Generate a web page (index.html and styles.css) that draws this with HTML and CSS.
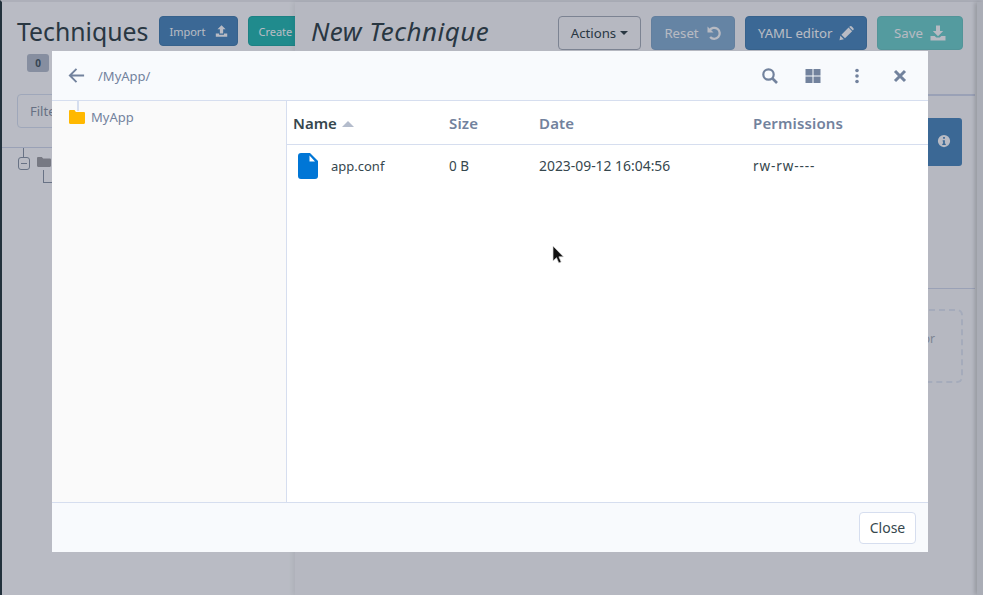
FILE: index.html
```html
<!DOCTYPE html>
<html>
  <head>
    <meta charset="UTF-8" />
    <meta name="viewport" content="width=device-width, initial-scale=1.0" />
    <title>Techniques</title>
    <link rel="stylesheet" href="styles.css">
  </head>
  <body>
    <div class="page">
      <aside class="sidebar">
        <div class="sidebar-head">
          <div class="title-row">
            <h1>Techniques</h1>
            <button class="btn btn-blue btn-small btn-import">Import
              <svg class="icon" viewBox="0 0 16 16"><path d="M8 1l5 5h-3v5H6V6H3zM1 11h4v1.500h6V11h4v4H1z"/></svg>
            </button>
            <button class="btn btn-teal btn-small">Create</button>
          </div>
          <span class="badge">0</span>
          <div class="filter">Filter</div>
        </div>
        <div class="tree">
          <span class="tree-toggle"></span>
          <svg class="tree-folder" viewBox="0 0 14 10"><path d="M0 1.200C0 .500.500 0 1.200 0h3.600l1.400 1.400h6.600c.7 0 1.200.5 1.200 1.200v6.200c0 .7-.5 1.200-1.200 1.200H1.200C.5 10 0 9.500 0 8.800z"/></svg>
          <span class="tree-branch"></span>
        </div>
      </aside>

      <main class="editor">
        <div class="editor-head">
          <h2>New Technique</h2>
          <div class="editor-actions">
            <button class="btn btn-outline btn-actions">Actions <span class="caret"></span></button>
            <button class="btn btn-blue btn-faded btn-reset">Reset
              <svg class="icon icon-large" viewBox="0 0 16 16"><path d="M1.500 1.500v6h6z" fill="currentColor"/><path d="M3.500 5.500a5.500 5.500 0 1 1 .6 6.500" fill="none" stroke="currentColor" stroke-width="2.300"/></svg>
            </button>
            <button class="btn btn-blue btn-yaml">YAML editor
              <svg class="icon icon-large" viewBox="0 0 16 16"><path d="M.5 15.500l.9-4.600 3.700 3.700zM2.500 9.800l7.400-7.400 3.700 3.700-7.400 7.400zM11 1.300c.7-.7 1.600-.7 2.300 0l1.400 1.400c.7.700.7 1.600 0 2.300l-.4.400-3.700-3.700z"/></svg>
            </button>
            <button class="btn btn-teal btn-faded btn-save">Save
              <svg class="icon icon-large" viewBox="0 0 16 16"><path d="M6 .5h4v5.500h3.200L8 11.200 2.800 6H6zM.5 11h4.200L6.200 12.500h3.600L11.300 11h4.200v4.500H.5z"/></svg>
            </button>
          </div>
        </div>
        <div class="editor-info">
          <div class="info-box">
            <svg class="icon" viewBox="0 0 16 16"><path fill-rule="evenodd" d="M8 1a7 7 0 1 0 0 14A7 7 0 0 0 8 1zM7 3.500h2v2H7zM6.500 7h2.500v4h1v1.500H6V11h1V8.500h-.5z"/></svg>
          </div>
        </div>
        <div class="editor-drop">
          <div class="drop-box">Drag and drop a method or</div>
        </div>
      </main>
      <div class="page-edge"></div>
    </div>

    <div class="backdrop"></div>

    <section class="modal">
      <header class="modal-head">
        <svg class="tool back" viewBox="0 0 20 20"><path d="M18 10H3M10 3l-7 7 7 7" fill="none" stroke="currentColor" stroke-width="2"/></svg>
        <span class="path">/MyApp/</span>
        <div class="tools">
          <svg class="tool" viewBox="0 0 16 16"><circle cx="6.500" cy="6.500" r="5.200" fill="none" stroke="currentColor" stroke-width="2.200"/><path d="M10.500 10.500l4.500 4.500" stroke="currentColor" stroke-width="2.600"/></svg>
          <svg class="tool" viewBox="0 0 16 16"><path d="M.5 1h7v6.500h-7zM8.500 1h7v6.500h-7zM.5 8.500h7V15h-7zM8.500 8.500h7V15h-7z"/></svg>
          <svg class="tool" viewBox="0 0 16 16"><circle cx="8" cy="2.500" r="1.800"/><circle cx="8" cy="8" r="1.800"/><circle cx="8" cy="13.500" r="1.800"/></svg>
          <svg class="tool" viewBox="0 0 16 16"><path d="M3 3l10 10M13 3L3 13" stroke="currentColor" stroke-width="3"/></svg>
        </div>
      </header>

      <div class="modal-body">
        <nav class="folders">
          <div class="folder">
            <svg class="folder-icon" viewBox="0 0 16 14"><path d="M0 1.200C0 .500.500 0 1.200 0h4.300l1.400 2h7.900c.7 0 1.200.5 1.200 1.200v9.600c0 .7-.5 1.200-1.200 1.200H1.200C.5 14 0 13.500 0 12.800z"/></svg>
            <span>MyApp</span>
          </div>
        </nav>
        <div class="files">
          <table>
            <thead>
              <tr>
                <th class="col-name sorted">Name <span class="sort-arrow"></span></th>
                <th class="col-size">Size</th>
                <th class="col-date">Date</th>
                <th>Permissions</th>
              </tr>
            </thead>
            <tbody>
              <tr>
                <td>
                  <div class="file-name">
                    <svg class="file-icon" viewBox="0 0 20 26"><path fill-rule="evenodd" d="M3 0h9l8 8v15a3 3 0 0 1-3 3H3a3 3 0 0 1-3-3V3a3 3 0 0 1 3-3zM11.500 2.500v6H17z"/></svg>
                    app.conf
                  </div>
                </td>
                <td>0 B</td>
                <td class="cell-date">2023-09-12 16:04:56</td>
                <td class="cell-perms">rw-rw----</td>
              </tr>
            </tbody>
          </table>
        </div>
      </div>

      <footer class="modal-foot">
        <button class="btn-close">Close</button>
      </footer>
    </section>

    <svg class="cursor" viewBox="0 0 13 20"><path d="M1 1v15l3.500-3.300 2.300 5.300 2.400-1-2.300-5.200H11.500z" fill="#111" stroke="#ddd" stroke-width=".7"/></svg>
  </body>
</html>
```

FILE: styles.css
```css
* {
  box-sizing: border-box;
  margin: 0;
  padding: 0;
}

html,
body {
  height: 100%;
  overflow: hidden;
}

body {
  background-color: #f8f9fc;
  font-family: "Noto Sans", sans-serif;
  font-size: 14px;
  color: #36474e;
}

.page {
  display: flex;
  height: 595px;
  border-left: 2px solid #2d3e45;
  border-top: 2px solid #e8e9ee;
}

/* left column */
.sidebar {
  width: 293px;
  flex-shrink: 0;
  overflow: hidden;
}

.sidebar-head {
  height: 146px;
  padding: 14px 0 0 15px;
  border-bottom: 1px solid #cfd6ea;
}

.title-row {
  display: flex;
  align-items: center;
  gap: 10px;
  width: 320px;
}

h1 {
  font-size: 24.800px;
  font-weight: 400;
  line-height: 30px;
  margin-right: 1px;
}

.badge {
  display: block;
  width: 22px;
  height: 18px;
  margin: 8px 0 0 10px;
  border-radius: 3px;
  background-color: #b4bccc;
  color: #4a5a66;
  font-size: 10px;
  font-weight: 700;
  line-height: 18px;
  text-align: center;
}

.filter {
  width: 260px;
  height: 34px;
  margin-top: 22px;
  padding-left: 12px;
  border: 1px solid #d6deef;
  border-radius: 4px;
  color: #8a94a6;
  font-size: 13px;
  line-height: 32px;
}

.tree {
  position: relative;
  height: 60px;
}

.tree-toggle {
  position: absolute;
  left: 16px;
  top: 9px;
  width: 12px;
  height: 13px;
  border: 1px solid #8b96a8;
  border-radius: 3px;
}

.tree-toggle::before {
  content: "";
  position: absolute;
  left: 4px;
  top: -10px;
  width: 1px;
  height: 9px;
  background-color: #8b96a8;
}

.tree-toggle::after {
  content: "";
  position: absolute;
  left: 2px;
  right: 2px;
  top: 5px;
  height: 1px;
  background-color: #8b96a8;
}

.tree-folder {
  position: absolute;
  left: 35px;
  top: 9px;
  width: 14px;
  height: 10px;
  fill: #a0a0a5;
}

.tree-branch {
  position: absolute;
  left: 41px;
  top: 22px;
  width: 10px;
  height: 13px;
  border-left: 1px solid #8b96a8;
  border-bottom: 1px solid #8b96a8;
}

/* right column */
.editor {
  flex: 1;
  min-width: 0;
  background-color: #f4f5f9;
  box-shadow: -2px 0 5px rgba(0, 0, 0, 0.07);
}

.editor-head {
  display: flex;
  justify-content: space-between;
  height: 94px;
  padding: 14px 12px 0 16px;
  border-bottom: 2px solid #cfd6ea;
}

h2 {
  font-size: 26px;
  font-style: italic;
  font-weight: 400;
  line-height: 30px;
  letter-spacing: 0.450px;
}

.editor-actions {
  display: flex;
  align-items: flex-start;
  gap: 10px;
}

.editor-info {
  display: flex;
  justify-content: flex-end;
  height: 193px;
  padding: 22px 13px 0 0;
  border-bottom: 1px solid #cfd6ea;
}

.info-box {
  display: flex;
  align-items: center;
  justify-content: flex-end;
  width: 200px;
  height: 48px;
  padding: 0 11px 2px 0;
  border-radius: 3px;
  background-color: #4f89bd;
  color: #f8f9fc;
}

.editor-drop {
  display: flex;
  justify-content: flex-end;
  padding: 20px 12px 0 0;
}

.drop-box {
  width: 420px;
  height: 74px;
  padding: 19px 26px 0 0;
  border: 2px dashed #dde3f0;
  border-radius: 6px;
  color: #a7aeba;
  font-size: 12px;
  text-align: right;
}

.page-edge {
  width: 6px;
  flex-shrink: 0;
  margin-left: 2px;
  background-color: #e4e6ea;
  box-shadow: -2px 0 4px rgba(0, 0, 0, 0.2);
}

/* buttons */
.btn {
  display: inline-flex;
  align-items: center;
  justify-content: center;
  gap: 7px;
  height: 34px;
  padding: 0 12px;
  border: 1px solid transparent;
  border-radius: 4px;
  font-family: inherit;
  font-size: 13.200px;
  white-space: nowrap;
  color: #f8f9fc;
}

.btn-small {
  height: 30px;
  padding: 0 9px;
  font-size: 11px;
  flex-shrink: 0;
}

.btn-import {
  width: 79px;
  gap: 10px;
}

.btn-actions {
  width: 83px;
}

.btn-reset {
  width: 84px;
}

.btn-yaml {
  width: 122px;
  gap: 6px;
}

.btn-save {
  width: 86px;
}

.btn-blue {
  background-color: #4f89bd;
  border-color: #4a80b1;
}

.btn-teal {
  background-color: #2ab8b3;
  border-color: #27aba6;
}

.btn-outline {
  background-color: transparent;
  border-color: #a7adb9;
  color: #36474e;
}

.btn-faded {
  opacity: 0.65;
}

.caret {
  width: 0;
  height: 0;
  margin-left: -3px;
  border: 4px solid transparent;
  border-top-color: currentColor;
  border-bottom-width: 0;
}

.icon {
  width: 14px;
  height: 14px;
  fill: currentColor;
}

.icon-large {
  width: 16px;
  height: 16px;
}

/* file manager */
.backdrop {
  position: fixed;
  inset: 0;
  background-color: rgba(4, 12, 34, 0.26);
}

.modal {
  position: absolute;
  left: 52px;
  top: 51px;
  display: flex;
  flex-direction: column;
  width: 876px;
  height: 501px;
  background-color: #fff;
}

.modal-head {
  display: flex;
  align-items: center;
  height: 50px;
  padding: 0 20px 0 15px;
  border-bottom: 1px solid #d6deef;
  background-color: #f8fafd;
  color: #72829d;
}

.path {
  margin-left: 12px;
  font-size: 13px;
}

.tools {
  display: flex;
  gap: 27.500px;
  margin-left: auto;
}

.tool {
  width: 16px;
  height: 16px;
  fill: currentColor;
}

.back {
  width: 19px;
  height: 19px;
}

.modal-body {
  display: flex;
  flex: 1;
  min-height: 0;
}

.folders {
  position: relative;
  width: 235px;
  flex-shrink: 0;
  padding: 9px 0 0 17px;
  border-right: 1px solid #d6deef;
  background-color: #fafafa;
}

.folders::before {
  content: "";
  position: absolute;
  left: 25px;
  top: 0;
  width: 2px;
  height: 10px;
  background-color: #d6deef;
}

.folder {
  display: flex;
  align-items: center;
  gap: 6px;
  height: 14px;
  color: #72829d;
  font-size: 13px;
}

.folder-icon {
  width: 16px;
  height: 14px;
  fill: #ffb800;
}

.files {
  flex: 1;
  min-width: 0;
}

table {
  width: 100%;
  border-collapse: collapse;
  table-layout: fixed;
}

th {
  height: 43px;
  padding: 1px 0 0 6px;
  border-bottom: 1px solid #d6deef;
  color: #72829d;
  font-size: 15px;
  font-weight: 600;
  letter-spacing: 0.150px;
  text-align: left;
}

th.sorted {
  color: #36474e;
  letter-spacing: 0;
}

td {
  height: 43px;
  padding-left: 6px;
  color: #36474e;
  font-size: 13.500px;
}

.col-name {
  width: 156px;
}

.col-size {
  width: 90px;
}

.col-date {
  width: 214px;
}

.sort-arrow {
  display: inline-block;
  margin: 0 0 2px 1px;
  border: 6px solid transparent;
  border-top-width: 0;
  border-bottom: 6px solid #b4bccc;
}

.file-name {
  display: flex;
  align-items: center;
  gap: 13px;
  padding-left: 5px;
  font-size: 13px;
}

.file-icon {
  width: 20px;
  height: 26px;
  fill: #0076d6;
}

.cell-date {
  font-size: 13.900px;
}

.cell-perms {
  letter-spacing: 0.900px;
}

.modal-foot {
  display: flex;
  align-items: center;
  justify-content: flex-end;
  height: 50px;
  padding-right: 12px;
  border-top: 1px solid #d6deef;
  background-color: #f8fafd;
}

.btn-close {
  width: 57px;
  height: 32px;
  border: 1px solid #d6deef;
  border-radius: 4px;
  background-color: #fff;
  color: #36474e;
  font-family: inherit;
  font-size: 14px;
}

.cursor {
  position: absolute;
  left: 552px;
  top: 245px;
  width: 13px;
  height: 20px;
}
```
